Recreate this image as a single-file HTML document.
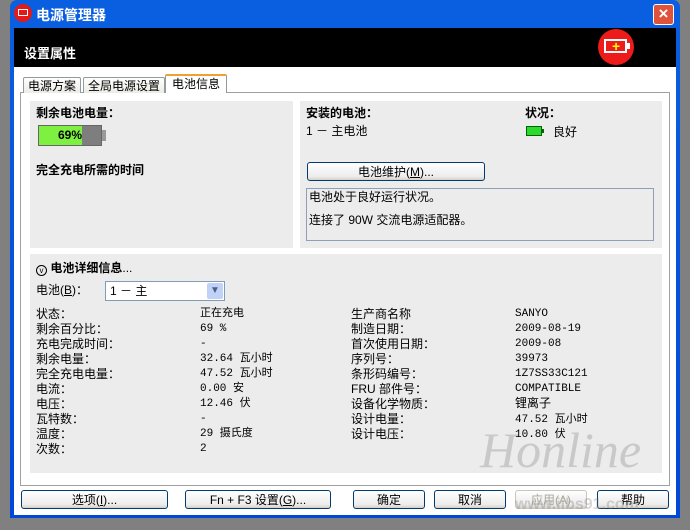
<!DOCTYPE html>
<html><head><meta charset="utf-8"><style>
*{margin:0;padding:0;box-sizing:border-box}
body{width:690px;height:530px;background:#808080;position:relative;overflow:hidden;font-family:"Liberation Sans","Noto Sans CJK SC","WenQuanYi Zen Hei",sans-serif;font-size:12px;color:#000}
.a{position:absolute}
.win{left:10px;top:0;width:670px;height:518px;background:linear-gradient(#0a5fe0,#0048d8);border-radius:7px 7px 0 0}
.title{left:36px;top:5px;color:#fff;font-weight:bold;font-size:14px}
.hdr{left:14px;top:28px;width:662px;height:39px;background:#000}
.body{left:14px;top:67px;width:662px;height:448px;background:#fff}
.panel{border:1px solid #a0a0a0;background:#fff}
.gray{background:#ececec}
.btn{border:1px solid #003c74;border-radius:3px;background:linear-gradient(#fff,#ececec 80%,#d6d0c5);text-align:center;line-height:18px;font-size:12px}
.tab{border:1px solid #919b9c;border-bottom:none;background:linear-gradient(#fff,#ecebe6);font-size:12px;line-height:16px;padding:0 4px;border-radius:2px 2px 0 0}
.t{position:absolute;font-size:12px;line-height:15px;white-space:nowrap}
.m{font-family:"Liberation Mono","Noto Sans CJK SC",monospace;font-size:11px}
.b{font-weight:bold}
</style></head><body>
<div class="a win"></div>
<div class="a" style="left:14px;top:4px;width:18px;height:18px;border-radius:50%;background:#e21a1a"></div>
<div class="a" style="left:18px;top:9px;width:10px;height:7px;border:1.5px solid #fff"></div>
<div class="a title">电源管理器</div>
<div class="a" style="left:653px;top:4px;width:21px;height:21px;background:#e0533a;border:1px solid #fff;border-radius:3px;color:#fff;font-size:17px;line-height:18px;text-align:center;font-weight:bold">×</div>
<div class="a hdr"></div>
<div class="a" style="left:24px;top:43px;color:#fff;font-weight:bold;font-size:13px">设置属性</div>
<div class="a" style="left:598px;top:29px;width:36px;height:36px;border-radius:50%;background:#ee1b1b"></div>
<div class="a" style="left:604px;top:39px;width:23px;height:14px;border:2px solid #fff"></div>
<div class="a" style="left:627px;top:43px;width:3px;height:6px;background:#fff"></div>
<div class="a" style="left:612px;top:39px;color:#ff0;font-weight:bold;font-size:14px;line-height:14px">+</div>
<div class="a body"></div>
<div class="a panel" style="left:20px;top:92px;width:650px;height:394px"></div>
<div class="a tab" style="left:23px;top:77px;height:16px">电源方案</div>
<div class="a tab" style="left:83px;top:77px;height:16px">全局电源设置</div>
<div class="a tab" style="left:165px;top:74px;height:19px;background:#fff;border-top:2px solid #f0a030;line-height:16px;padding:0 6px">电池信息</div>
<div class="a gray" style="left:30px;top:101px;width:263px;height:147px"></div>
<div class="a gray" style="left:300px;top:101px;width:362px;height:147px"></div>
<div class="a gray" style="left:30px;top:254px;width:632px;height:219px"></div>
<div class="t b" style="left:36px;top:106px">剩余电池电量：</div>
<div class="a" style="left:38px;top:125px;width:64px;height:21px;background:#7e7e7e;border:1px solid #666"></div>
<div class="a" style="left:39px;top:126px;width:43px;height:19px;background:#7ef040"></div>
<div class="a" style="left:102px;top:130px;width:4px;height:11px;background:#999"></div>
<div class="t b" style="left:58px;top:128px">69%</div>
<div class="t b" style="left:36px;top:163px">完全充电所需的时间</div>
<div class="t b" style="left:306px;top:106px">安装的电池：</div>
<div class="t" style="left:306px;top:124px">1 － 主电池</div>
<div class="t b" style="left:525px;top:106px">状况：</div>
<div class="a" style="left:526px;top:126px;width:16px;height:10px;background:#2ed82e;border:1px solid #060"></div>
<div class="a" style="left:542px;top:129px;width:2px;height:4px;background:#060"></div>
<div class="t" style="left:553px;top:125px">良好</div>
<div class="a btn" style="left:307px;top:162px;width:178px;height:19px">电池维护(<u>M</u>)...</div>
<div class="a" style="left:306px;top:188px;width:348px;height:53px;border:1px solid #8ca0b8"></div>
<div class="t" style="left:309px;top:190px">电池处于良好运行状况。</div>
<div class="t" style="left:309px;top:213px">连接了 90W 交流电源适配器。</div>
<div class="t" style="left:36px;top:261px"><span style="display:inline-block;width:11px;height:11px;border:1px solid #000;border-radius:50%;font-size:8px;line-height:9px;text-align:center;vertical-align:-1px">v</span> <b>电池详细信息</b>...</div>
<div class="t" style="left:36px;top:283px">电池(<u>B</u>)：</div>
<div class="a" style="left:105px;top:281px;width:120px;height:20px;border:1px solid #7f9db9;background:#fff"></div>
<div class="t" style="left:110px;top:284px">1 － 主</div>
<div class="a" style="left:207px;top:283px;width:16px;height:16px;background:#c0d2f8;border-radius:2px;color:#4d6185;font-size:10px;text-align:center;line-height:16px">▼</div>
<div class="t" style="left:36px;top:307px;line-height:15px">状态：<br>剩余百分比：<br>充电完成时间：<br>剩余电量：<br>完全充电电量：<br>电流：<br>电压：<br>瓦特数：<br>温度：<br>次数：</div>
<div class="t m" style="left:200px;top:307px;line-height:15px">正在充电<br>69 %<br>-<br>32.64 瓦小时<br>47.52 瓦小时<br>0.00 安<br>12.46 伏<br>-<br>29 摄氏度<br>2</div>
<div class="t" style="left:351px;top:307px;line-height:15px">生产商名称<br>制造日期：<br>首次使用日期：<br>序列号：<br>条形码编号：<br>FRU 部件号：<br>设备化学物质：<br>设计电量：<br>设计电压：</div>
<div class="t m" style="left:515px;top:307px;line-height:15px">SANYO<br>2009-08-19<br>2009-08<br>39973<br>1Z7SS33C121<br>COMPATIBLE<br><span style="font-size:12px">锂离子</span><br>47.52 瓦小时<br>10.80 伏</div>
<div class="a btn" style="left:21px;top:490px;width:147px;height:19px">选项(<u>I</u>)...</div>
<div class="a btn" style="left:185px;top:490px;width:146px;height:19px">Fn + F3 设置(<u>G</u>)...</div>
<div class="a btn" style="left:353px;top:490px;width:72px;height:19px">确定</div>
<div class="a btn" style="left:434px;top:490px;width:72px;height:19px">取消</div>
<div class="a btn" style="left:515px;top:490px;width:72px;height:19px;color:#aca899;border-color:#c9c7ba">应用(A)</div>
<div class="a btn" style="left:597px;top:490px;width:72px;height:19px">帮助</div>
<div class="a" style="left:480px;top:425px;color:rgba(120,120,120,.3);font-family:'Liberation Serif',serif;font-style:italic;font-size:50px;line-height:50px">Honline</div>
<div class="a" style="left:515px;top:496px;color:rgba(120,120,120,.3);font-size:16px;font-weight:bold">www.iibs91.com</div>
</body></html>
